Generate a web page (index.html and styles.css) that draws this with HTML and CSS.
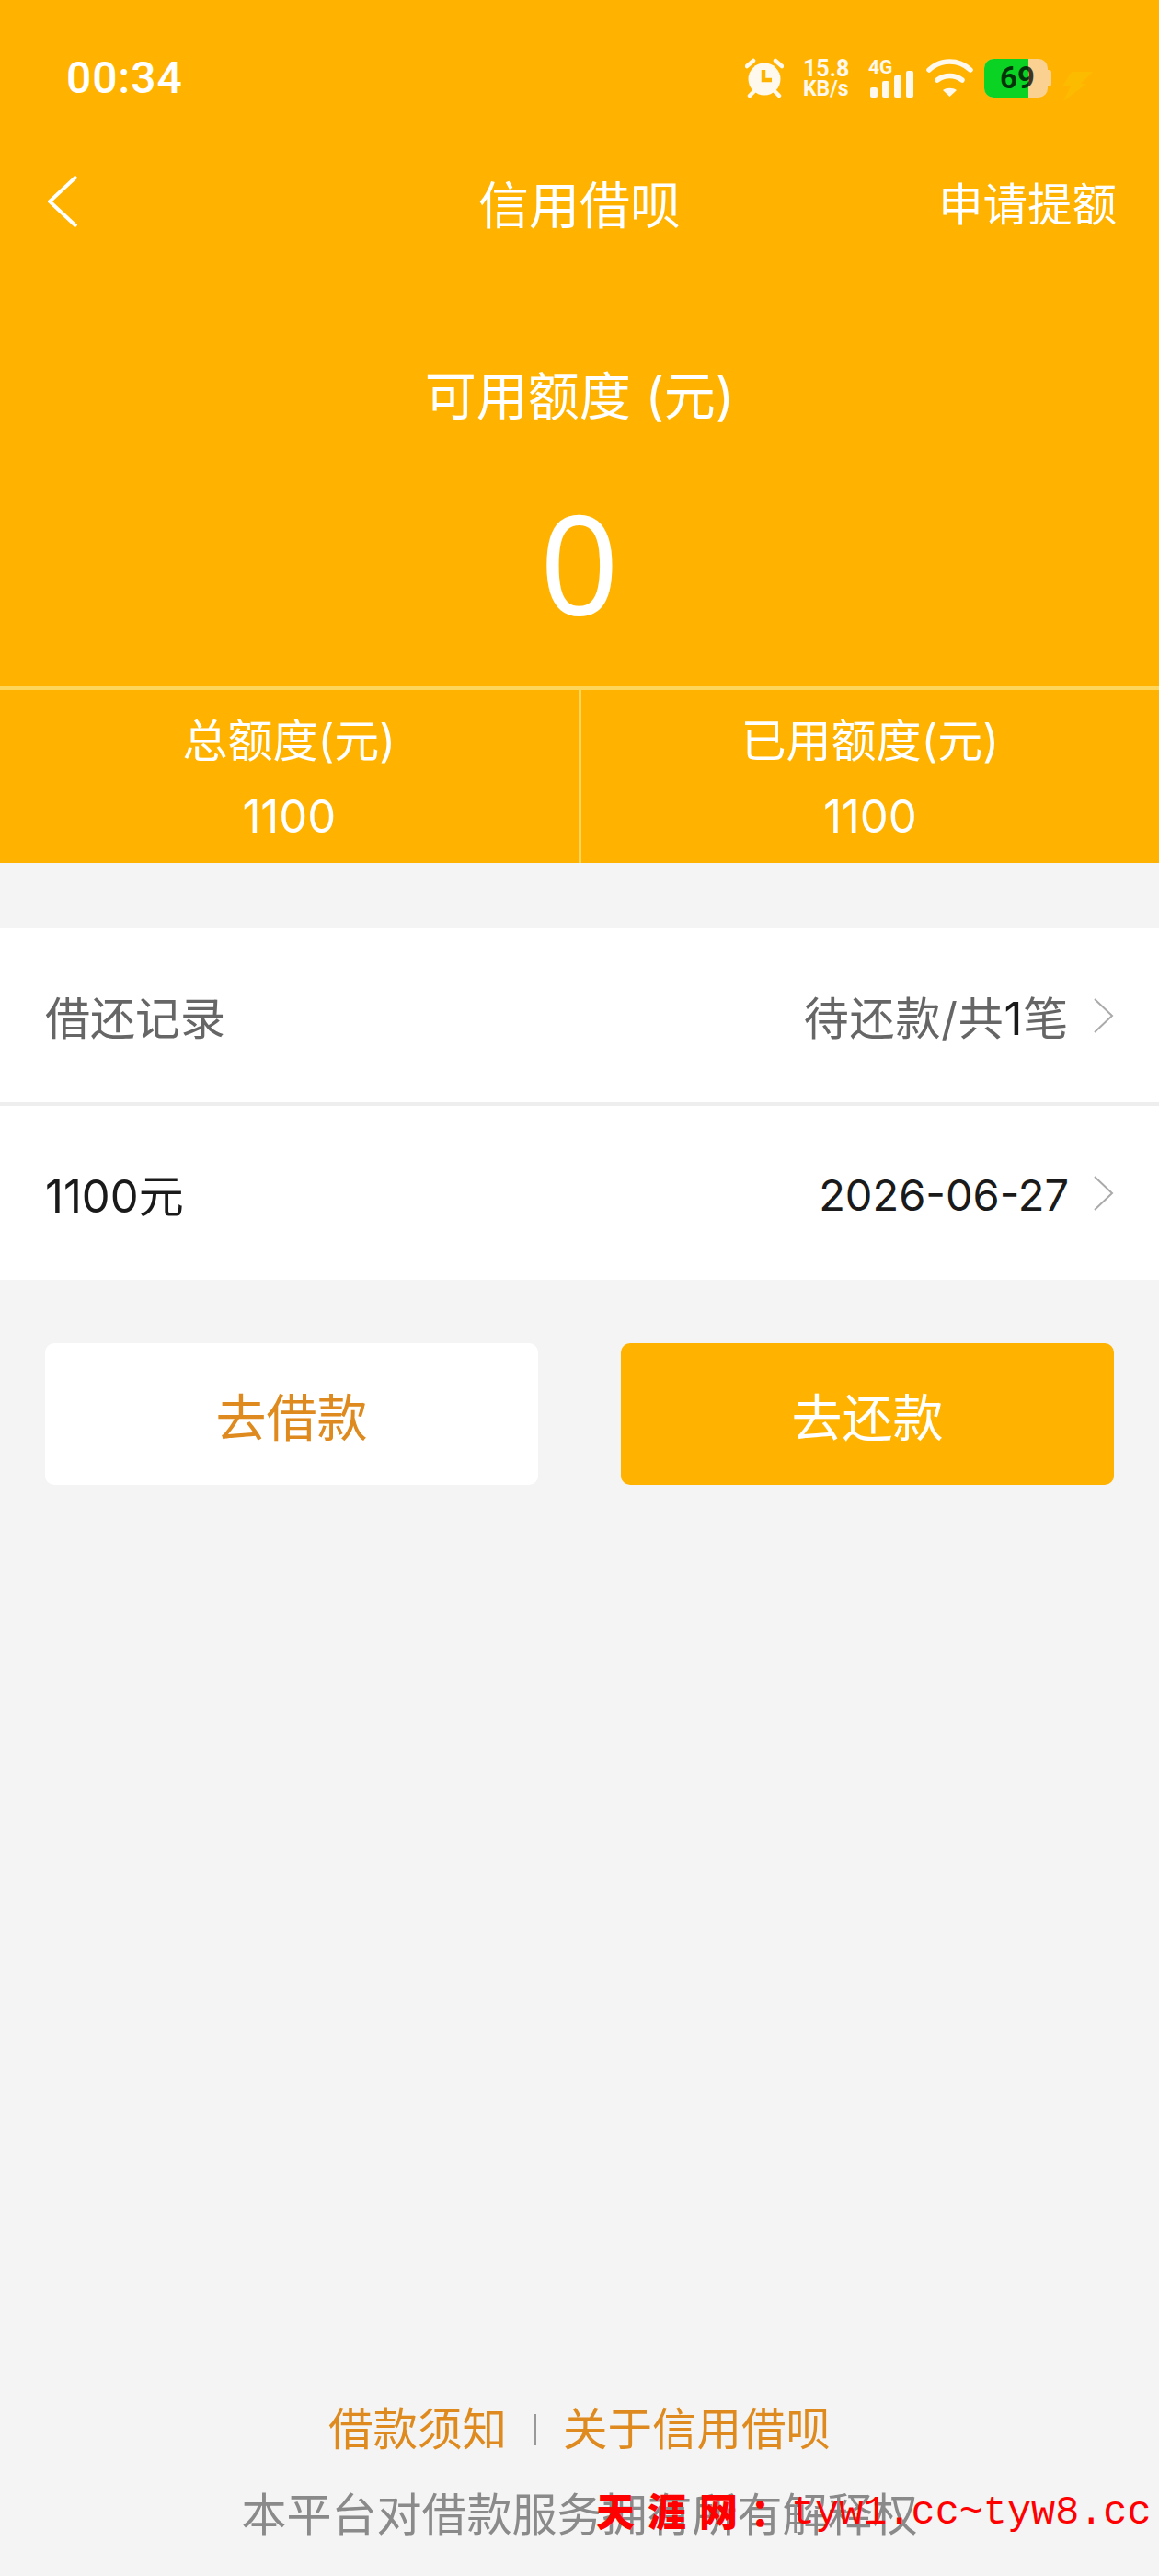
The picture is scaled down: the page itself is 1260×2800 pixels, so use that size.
FILE: index.html
```html
<!DOCTYPE html>
<html lang="zh-CN">
<head>
    <meta charset="UTF-8">
    <meta name="viewport" content="width=device-width, initial-scale=1.0">
    <title>信用借呗</title>
    <link rel="stylesheet" href="styles.css">
</head>
<body>
    <header class="top">
        <div class="status-bar">
            <span class="time">00:34</span>
            <div class="status-icons">
                <svg class="icon-alarm" width="42" height="43" viewBox="0 0 42 43">
                    <circle cx="21" cy="23" r="17.500" fill="#fff8ec"/>
                    <path d="M20 13v11h9" fill="none" stroke="#ffb300" stroke-width="4.500"/>
                    <path d="M2 9 9 3M40 9 33 3M5 41l5-5M37 41l-5-5" fill="none" stroke="#fff8ec" stroke-width="4.500" stroke-linecap="round"/>
                </svg>
                <div class="speed">
                    <span class="speed-num">15.8</span>
                    <span class="speed-unit">KB/s</span>
                </div>
                <div class="signal">
                    <span class="signal-type">4G</span>
                    <div class="bars">
                        <i class="bar bar-1"></i>
                        <i class="bar bar-2"></i>
                        <i class="bar bar-3"></i>
                        <i class="bar bar-4"></i>
                    </div>
                </div>
                <svg class="icon-wifi" width="51" height="42" viewBox="0 0 51 42">
                    <path d="M3 13C16 1 35 1 48 13" fill="none" stroke="#fff8ec" stroke-width="5.500" stroke-linecap="round"/>
                    <path d="M12 24c8-6 19-6 27 0" fill="none" stroke="#fff8ec" stroke-width="5.500" stroke-linecap="round"/>
                    <path d="M18 35c4-3 11-3 15 0l-7.500 7z" fill="#fff8ec"/>
                </svg>
                <div class="battery">
                    <div class="battery-body">
                        <div class="battery-level"></div>
                        <span class="battery-num">69</span>
                    </div>
                    <i class="battery-cap"></i>
                </div>
                <svg class="icon-bolt" width="33" height="32" viewBox="0 0 33 32">
                    <path d="M10 0h23L20 13h6L1 32 9 16H0z" fill="#f9d000"/>
                </svg>
            </div>
        </div>
        <nav class="nav">
            <svg class="back" width="32" height="56" viewBox="0 0 32 56">
                <path d="M31 1 2 28l29 27" fill="none" stroke="#fff" stroke-width="4"/>
            </svg>
            <h1 class="nav-title">信用借呗</h1>
            <a class="nav-link">申请提额</a>
        </nav>
        <div class="quota">
            <p class="quota-label">可用额度 (元)</p>
            <p class="quota-num">0</p>
        </div>
        <div class="stats">
            <div class="stat">
                <span>总额度(元)</span>
                <span>1100</span>
            </div>
            <div class="stat">
                <span>已用额度(元)</span>
                <span>1100</span>
            </div>
        </div>
    </header>

    <main>
        <div class="list">
            <div class="row row-muted">
                <span>借还记录</span>
                <div class="row-right">
                    <span class="row-count">待还款/共<b>1</b>笔</span>
                    <svg class="arrow" width="22" height="38" viewBox="0 0 22 38">
                        <path d="M1 1l19 18L1 37" fill="none" stroke="#aaa" stroke-width="2"/>
                    </svg>
                </div>
            </div>
            <div class="row">
                <span>1100元</span>
                <div class="row-right">
                    <span class="row-date">2026-06-27</span>
                    <svg class="arrow" width="22" height="38" viewBox="0 0 22 38">
                        <path d="M1 1l19 18L1 37" fill="none" stroke="#aaa" stroke-width="2"/>
                    </svg>
                </div>
            </div>
        </div>
        <div class="actions">
            <button class="btn btn-light">去借款</button>
            <button class="btn btn-main">去还款</button>
        </div>
    </main>

    <footer>
        <div class="links">
            <a>借款须知</a>
            <i class="links-sep"></i>
            <a>关于信用借呗</a>
        </div>
        <p class="claim">本平台对借款服务拥有所有解释权</p>
        <div class="watermark"><b>天涯网：</b><span>tyw1.cc~tyw8.cc</span></div>
    </footer>
</body>
</html>
```

FILE: styles.css
```css
html, body {
    margin: 0;
    padding: 0;
}
body {
    width: 1260px;
    min-height: 2800px;
    display: flex;
    flex-direction: column;
    background-color: #f4f4f4;
    font-family: Inter, "Noto Sans CJK SC", sans-serif;
    color: #1a1a1a;
}
p, h1 {
    margin: 0;
    font-weight: 400;
}

/* 顶部黄色区域 */
.top {
    height: 938px;
    background-color: #ffb300;
    color: #fff;
    display: flex;
    flex-direction: column;
}
.status-bar {
    height: 170px;
    box-sizing: border-box;
    padding: 63px 72px 0 72px;
    display: flex;
    justify-content: space-between;
    align-items: flex-start;
}
.time {
    font-family: Roboto, sans-serif;
    font-weight: 500;
    font-size: 48px;
    line-height: 44px;
    letter-spacing: 1px;
}
.status-icons {
    display: flex;
    align-items: flex-start;
}
.icon-alarm {
    margin-right: 21px;
}
.speed {
    width: 50px;
    margin-right: 21px;
    display: flex;
    flex-direction: column;
    font-family: Roboto, sans-serif;
    font-weight: 700;
    color: #fff8ec;
    white-space: nowrap;
}
.speed-num {
    font-size: 25px;
    line-height: 24px;
}
.speed-unit {
    font-size: 23px;
    line-height: 20px;
}
.signal {
    width: 49px;
    height: 43px;
    margin-right: 14px;
    position: relative;
}
.signal-type {
    position: absolute;
    top: 0;
    left: 0;
    font-family: Roboto, sans-serif;
    font-weight: 700;
    font-size: 21px;
    line-height: 20px;
    color: #fff8ec;
}
.bars {
    height: 29px;
    margin-top: 14px;
    padding-left: 2px;
    display: flex;
    align-items: flex-end;
    gap: 5px;
}
.bar {
    width: 8px;
    background-color: #fff8ec;
    border-radius: 2px;
}
.bar-1 { height: 11px; }
.bar-2 { height: 18px; }
.bar-3 { height: 24px; }
.bar-4 { height: 29px; }
.icon-wifi {
    margin-right: 12px;
}
.battery {
    display: flex;
    align-items: center;
    margin-top: 1px;
    margin-right: 12px;
}
.battery-body {
    width: 69px;
    height: 42px;
    border-radius: 10px;
    background-color: #fad190;
    position: relative;
    overflow: hidden;
}
.battery-level {
    width: 48px;
    height: 100%;
    background-color: #0bd324;
}
.battery-num {
    position: absolute;
    left: 17px;
    top: 0;
    font-family: Roboto, sans-serif;
    font-weight: 700;
    font-size: 33px;
    line-height: 42px;
    color: rgba(0,0,0,0.75);
}
.battery-cap {
    width: 4px;
    height: 18px;
    background-color: #fad190;
    border-radius: 0 3px 3px 0;
}
.icon-bolt {
    margin-top: 15px;
    opacity: 0.3;
}

/* 导航 */
.nav {
    height: 98px;
    padding: 0 46px 0 52px;
    display: flex;
    align-items: center;
    justify-content: space-between;
    position: relative;
}
.nav-title {
    position: absolute;
    left: 0;
    right: 0;
    text-align: center;
    font-size: 55px;
}
.nav-link {
    font-size: 48.500px;
    position: relative;
}

/* 额度 */
.quota {
    flex: 1;
    display: flex;
    flex-direction: column;
    align-items: center;
}
.quota-label {
    margin-top: 125px;
    font-size: 56px;
    line-height: 76px;
}
.quota-num {
    margin-top: 52px;
    font-family: "Noto Sans", sans-serif;
    font-size: 150px;
    line-height: 180px;
}
.stats {
    height: 192px;
    box-sizing: border-box;
    border-top: 4px solid #ffd65c;
    display: flex;
}
.stat {
    flex: 1;
    display: flex;
    flex-direction: column;
    align-items: center;
    padding-top: 21px;
    font-size: 49px;
    line-height: 70px;
    gap: 12px;
}
.stat + .stat {
    border-left: 3px solid #ffd65c;
}

/* 列表 */
main {
    padding-top: 71px;
}
.list {
    display: flex;
    flex-direction: column;
    gap: 4px;
    background-color: #eeeeee;
}
.row {
    height: 189px;
    padding: 0 49px;
    background-color: #fff;
    display: flex;
    align-items: center;
    justify-content: space-between;
    font-size: 49px;
}
.row-muted {
    color: #666;
}
.row-muted b {
    font-weight: 400;
    color: #1a1a1a;
}
.row-right {
    display: flex;
    align-items: center;
    gap: 27px;
}
.row-count {
    letter-spacing: 0.800px;
}
.row-date {
    font-size: 47px;
    padding-top: 4px;
}
.actions {
    margin-top: 69px;
    padding: 0 49px;
    display: flex;
    justify-content: space-between;
}
.btn {
    width: 536px;
    height: 154px;
    border: none;
    border-radius: 10px;
    font-family: inherit;
    font-size: 55px;
}
.btn-light {
    background-color: #fff;
    color: #de8a1e;
}
.btn-main {
    background-color: #ffb300;
    color: #fff;
}

/* 底部 */
footer {
    margin-top: auto;
    padding-bottom: 31px;
    display: flex;
    flex-direction: column;
    align-items: center;
    position: relative;
}
.links {
    display: flex;
    align-items: center;
    font-size: 48.500px;
    line-height: 70px;
    color: #de8a1e;
}
.links-sep {
    width: 3px;
    height: 34px;
    margin: 0 29px;
    background-color: #999;
}
.claim {
    margin-top: 23px;
    font-size: 49px;
    line-height: 70px;
    color: #8a8a8a;
}
.watermark {
    position: absolute;
    left: 648px;
    top: 91px;
    display: flex;
    align-items: center;
    color: #f00;
    white-space: nowrap;
}
.watermark b {
    width: 212px;
    font-size: 42px;
    font-weight: 900;
    letter-spacing: 14px;
}
.watermark span {
    padding-top: 8px;
    font-family: "Liberation Mono", monospace;
    font-size: 43.500px;
}
```
